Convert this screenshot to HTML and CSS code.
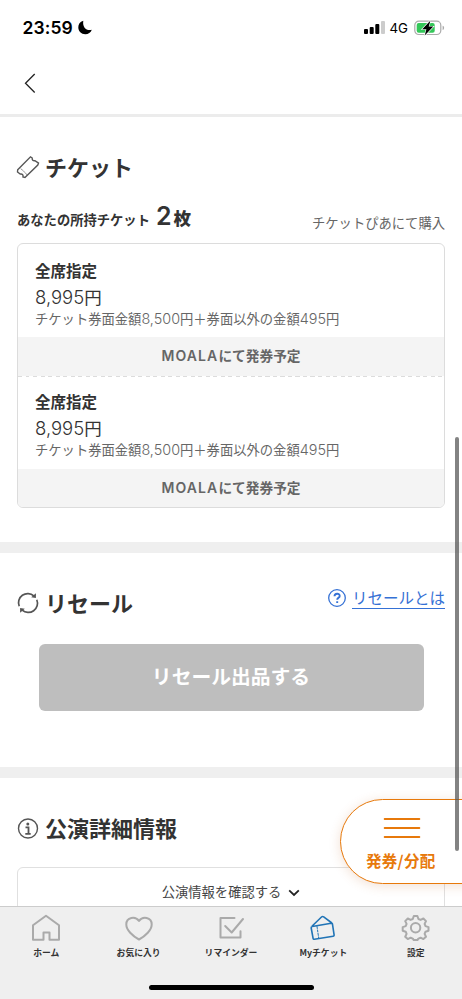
FILE: index.html
```html
<!DOCTYPE html>
<html lang="ja">
<head>
<meta charset="utf-8">
<title>Myチケット</title>
<link rel="stylesheet" href="styles.css">
</head>
<body>
<div class="screen">
  <header class="top">
    <div class="status">
      <span class="time">23:59</span>
      <svg class="moon" width="14" height="15" viewBox="0 0 14 15"><path d="M5.300.7C1.800 1.900.3 4.300.3 7.200c0 4 3 7 7 7 3.100 0 5.400-1.700 6.500-4.500-4.800 1.500-9.600-1.800-8.500-9z"/></svg>
      <svg class="signal" width="22" height="14" viewBox="0 0 22 14"><rect x="0" y="8" width="4" height="5" rx="1"/><rect x="5.700" y="6" width="4" height="7" rx="1"/><rect x="11.300" y="3" width="4" height="10" rx="1"/><rect class="off" x="17" y="0" width="4" height="13" rx="1"/></svg>
      <span class="net">4G</span>
      <svg class="battery" width="31" height="16" viewBox="0 0 31 16"><rect class="shell" x=".8" y="1.200" width="26" height="13.300" rx="4"/><path class="nub" d="M28.600 5.700c2 .6 2 3.600 0 4.300z"/><rect class="charge" x="2.700" y="3" width="18" height="9.700" rx="2"/><path class="bolt" d="M16.500.5 8.200 9.200h4.200l-1.700 6.300 8.600-9h-4.600z"/></svg>
    </div>
    <svg class="back" width="12" height="21" viewBox="0 0 12 21"><path d="M10.700 1 1.500 10.300 10.700 19.500"/></svg>
  </header>

  <main class="content">
    <section class="tickets">
      <h2 class="title">
        <svg class="title-icon" width="24" height="24" viewBox="0 0 24 24"><path d="M1.700 14.800 14.500 1.800l1.700 1.200c-.2 1.800.8 3.100 2.800 2.700l3.500 2.400-.7 2L9 22.500l-2-.6c.4-2-.8-3.200-2.800-2.800L1.500 17z"/><path class="perforation" d="m5 13.700 6 6"/></svg>
        <span>チケット</span>
      </h2>
      <div class="owned">
        <div class="count"><span>あなたの所持チケット</span><b class="number">2</b><b class="unit">枚</b></div>
        <div class="vendor">チケットぴあにて購入</div>
      </div>
      <div class="card">
        <article class="ticket">
          <h3 class="seat">全席指定</h3>
          <p class="price"><i>8,995</i>円</p>
          <p class="detail">チケット券面金額<i>8,500</i>円＋券面以外の金額<i>495</i>円</p>
          <div class="issue"><i>MOALA</i>にて発券予定</div>
        </article>
        <article class="ticket">
          <h3 class="seat">全席指定</h3>
          <p class="price"><i>8,995</i>円</p>
          <p class="detail">チケット券面金額<i>8,500</i>円＋券面以外の金額<i>495</i>円</p>
          <div class="issue"><i>MOALA</i>にて発券予定</div>
        </article>
      </div>
    </section>

    <section class="resale">
      <div class="resale-head">
        <h2 class="title">
          <svg class="title-icon" width="24" height="24" viewBox="0 0 24 24"><path class="thick" d="M3.200 15.300A9.200 9.200 0 0 1 17.800 4.900M20.800 8.700A9.200 9.200 0 0 1 6.200 19.100"/><path class="arrow" d="M15.200 6.300 19.900 2.300v4.800zM8.800 17.700 4.100 21.700v-4.800z"/></svg>
          <span>リセール</span>
        </h2>
        <a class="help">
          <svg width="18" height="18" viewBox="0 0 18 18"><circle cx="9" cy="9" r="8.300"/><path class="question" d="M6.500 7.300c.1-3.300 5.200-3.300 5.200-.4 0 1.900-2.500 2-2.500 3.900M9.200 12.200v1.700"/></svg>
          <span>リセールとは</span>
        </a>
      </div>
      <button class="sell">リセール出品する</button>
    </section>

    <section class="event">
      <h2 class="title">
        <svg class="title-icon" width="24" height="24" viewBox="0 0 24 24"><circle cx="12" cy="12.500" r="9.500"/><circle class="dot" cx="11.800" cy="8" r="1.500"/><path class="stem" d="M9.500 11.300h3v6.300M9.300 17.800h5.400"/></svg>
        <span>公演詳細情報</span>
      </h2>
      <div class="confirm"><span>公演情報を確認する</span><svg width="12" height="8" viewBox="0 0 12 8"><path d="m1.200 1.300 4.800 4.600 4.800-4.600"/></svg></div>
    </section>
  </main>

  <button class="float">
    <svg width="36" height="22" viewBox="0 0 36 22"><path d="M.7 2h34.600M.7 11h34.600M.7 20h34.600"/></svg>
    <span>発券/分配</span>
  </button>
  <div class="scrollbar"></div>

  <nav class="tabs">
    <div class="tab-row">
      <div class="tab"><svg width="30" height="28" viewBox="0 0 30 28"><path d="M2 11.300 15 1.700l13 9.600v14.500h-9.500V18.500h-6v7.300H2z"/></svg><span>ホーム</span></div>
      <div class="tab"><svg width="30" height="28" viewBox="0 0 30 28"><path d="M15 25.500C8.500 22 2.300 16 2.300 10.500c0-7.500 9.200-8.500 12.700-3.500 3.500-5 12.700-4 12.700 3.500 0 5.500-6.200 11.500-12.700 15z"/></svg><span>お気に入り</span></div>
      <div class="tab"><svg width="30" height="28" viewBox="0 0 30 28"><path d="M18.500 4H4.500v19.500h20v-6.300M9.200 12l6.500 6.500L27 5"/></svg><span>リマインダー</span></div>
      <div class="tab active"><svg width="30" height="28" viewBox="0 0 30 28"><path d="m4.200 12.500 19-3.200c.8-.1 1.200.2 1.300 1l1.600 10.600c.1.800-.2 1.200-1 1.300L6.400 25.300c-.8.100-1.200-.2-1.300-1L3.200 14c-.1-.8.300-1.400 1-1.500zM4.200 12l9.300-9c.7-.7 1.400-.7 2.200-.1l7.500 5.600c.4.300.6.600.7 1"/><path class="perforation" d="m9 12.500 1.700 11.500"/></svg><span>Myチケット</span></div>
      <div class="tab"><svg width="30" height="28" viewBox="0 0 30 28"><circle cx="14.600" cy="13.700" r="4.700"/><path d="M12.800 2h3.600l1 3 2.200.9 2.800-1.400L25 7.100l-1.400 2.800.9 2.200 3 1v3.600l-3 1-.9 2.200 1.400 2.800-2.600 2.400-2.800-1.400-2.200.9-1 1.500h-3.600l-1-1.500-2.200-.9-2.800 1.400-2.600-2.400 1.400-2.800-.9-2.200-3-1v-3.600l3-1 .9-2.200-1.400-2.800 2.600-2.600 2.800 1.400 2.200-.9z"/></svg><span>設定</span></div>
    </div>
    <div class="home-bar"></div>
  </nav>
</div>
</body>
</html>
```
FILE: styles.css
```css
* { box-sizing: border-box; margin: 0; padding: 0; }
html, body { overflow: hidden; }
body { font-family: "Noto Sans CJK JP", sans-serif; color: #333; background: #fff; }
button { border: 0; font-family: inherit; }
i { font-style: normal; }
svg { display: block; flex: none; fill: none; overflow: visible; }

.screen { position: relative; width: 462px; height: 999px; display: flex; flex-direction: column; overflow: hidden; }

.top { flex: none; height: 117px; border-bottom: 3px solid #ececec; }
.status { display: flex; align-items: center; height: 55px; padding: 0 19px 0 22.500px; color: #000; font-family: Inter, sans-serif; }
.time { width: 52px; font-size: 17.500px; font-weight: 600; letter-spacing: .1px; white-space: nowrap; }
.moon { margin-left: 3px; fill: #000; }
.signal { margin-left: auto; fill: #000; }
.signal .off { fill: #ccc; }
.net { width: 19px; margin: 0 5px 0 4px; font-size: 13.300px; font-weight: 400; white-space: nowrap; }
.shell { stroke: #aaa; stroke-width: 1.200; }
.nub { fill: #aaa; }
.battery { margin-right: -1.500px; }
.charge { fill: #34c759; }
.bolt { fill: #000; stroke: #fff; stroke-width: 1.200; paint-order: stroke; }
.back { margin: 18px 0 0 24px; stroke: #222; stroke-width: 1.300; }

.content { flex: 1; min-height: 0; overflow: hidden; }
.title { display: flex; align-items: center; gap: 5px; height: 32px; font-size: 22px; font-weight: 700; line-height: 32px; }
.title span { margin-top: -2px; }
.title-icon { stroke: #555; stroke-width: 1.400; }
.title-icon .perforation { stroke-width: 1; stroke-dasharray: 1.500 1; }
.title-icon .thick { stroke-width: 1.700; }
.title-icon .arrow, .title-icon .dot { fill: #555; stroke: none; }
.title-icon .stem { stroke-width: 1.800; }

.tickets { height: 436px; padding: 34px 17px 0 16px; border-bottom: 11px solid #efefef; }
.owned { display: flex; justify-content: space-between; height: 60px; margin-left: 1px; }
.count { display: flex; align-items: baseline; padding-top: 13px; font-size: 13.300px; font-weight: 700; line-height: 40px; white-space: nowrap; }
.number { margin-left: 6px; font-size: 25px; font-family: Inter, sans-serif; font-weight: 600; }
.unit { margin-left: 2px; font-size: 17.500px; }
.vendor { padding-top: 28.500px; font-size: 13.300px; line-height: 22px; color: #666; white-space: nowrap; }
.card { height: 265px; margin-left: 1px; border: 1px solid #dcdcdc; border-radius: 6px; overflow: hidden; }
.ticket { height: 132px; padding-top: 13px; white-space: nowrap; }
.ticket + .ticket { margin-top: 0; padding-top: 12px; background: repeating-linear-gradient(90deg, #dcdcdc 0 4px, transparent 4px 7.500px) 0 0 / 100% 1px no-repeat; }
.seat { padding-left: 17px; font-size: 15.500px; line-height: 26px; }
.price { padding-left: 17px; height: 28px; margin-top: 1px; font-size: 17.500px; line-height: 26px; }
.price i { font-family: Inter, sans-serif; font-weight: 300; font-size: 18.500px; }
.detail { padding-left: 17px; font-size: 13.300px; line-height: 14px; color: #666; }
.detail i { font-family: Inter, sans-serif; font-weight: 300; font-size: 14.400px; }
.issue { height: 39px; margin-top: 11px; background: #f4f4f4; color: #666; font-size: 13.700px; font-weight: 700; line-height: 37px; text-align: center; }
.ticket + .ticket .issue { margin-top: 12px; height: 40px; }
.issue i { font-family: Inter, sans-serif; font-weight: 600; letter-spacing: 1.100px; font-size: 14px; }

.resale { height: 225px; padding: 34px 17px 0 16px; border-bottom: 11px solid #efefef; }
.resale-head { display: flex; justify-content: space-between; }
.help { display: flex; align-items: center; gap: 6px; height: 22px; color: #3571d5; }
.help svg { stroke: #3571d5; stroke-width: 1.300; }
.help .question { stroke-width: 1.900; }
.help span { height: 22px; border-bottom: 1px solid #3571d5; font-size: 15.500px; line-height: 20px; }
.sell { display: block; width: 385px; height: 67px; margin: 25px 0 0 22.500px; padding-bottom: 4px; border-radius: 6px; background: #bebebe; color: #fff; font-size: 19.800px; font-weight: 700; }

.event { padding: 34px 17px 0 16px; }
.confirm { display: flex; justify-content: center; gap: 7px; height: 70px; margin: 23px 0 0 1px; padding: 13.500px 0 0; border: 1px solid #e0e0e0; border-radius: 6px; color: #444; font-size: 13.300px; line-height: 20px; }
.confirm svg { margin-top: 7px; stroke: #222; stroke-width: 1.800; }

.float { position: absolute; left: 340px; top: 799px; width: 140px; height: 85px; padding: 16.500px 0 0 25px; display: flex; flex-direction: column; align-items: flex-start; border: 1.500px solid #e7790b; border-radius: 43px 0 0 43px; background: #fff; box-shadow: 0 2px 12px rgba(190, 100, 40, .2); color: #e7790b; font-size: 15.500px; font-weight: 700; line-height: 24px; letter-spacing: .3px; white-space: nowrap; }
.float svg { margin-left: 18px; stroke: #e7790b; stroke-width: 2; stroke-linecap: round; }
.float span { margin-top: 9px; }
.scrollbar { position: absolute; left: 455px; top: 437px; width: 4px; height: 414px; border-radius: 2px; background: rgba(90, 90, 90, .75); }

.tabs { position: relative; flex: none; height: 93px; border-top: 1px solid #ccc; background: #efefef; }
.tab-row { display: grid; grid-template-columns: repeat(5, 92.400px); }
.tab { display: flex; flex-direction: column; align-items: center; padding-top: 7px; font-size: 8.800px; font-weight: 700; line-height: 14px; white-space: nowrap; }
.tab svg { stroke: #aaa; stroke-width: 2; stroke-linejoin: round; stroke-linecap: round; }
.tab span { margin-top: 4px; }
.tab.active svg { stroke: #2174b6; stroke-width: 1.600; }
.tab .perforation { stroke-width: 1; stroke-dasharray: 2 1.500; }
.home-bar { width: 165px; height: 5.500px; margin: 24.500px auto 0; border-radius: 3px; background: #000; }
```
